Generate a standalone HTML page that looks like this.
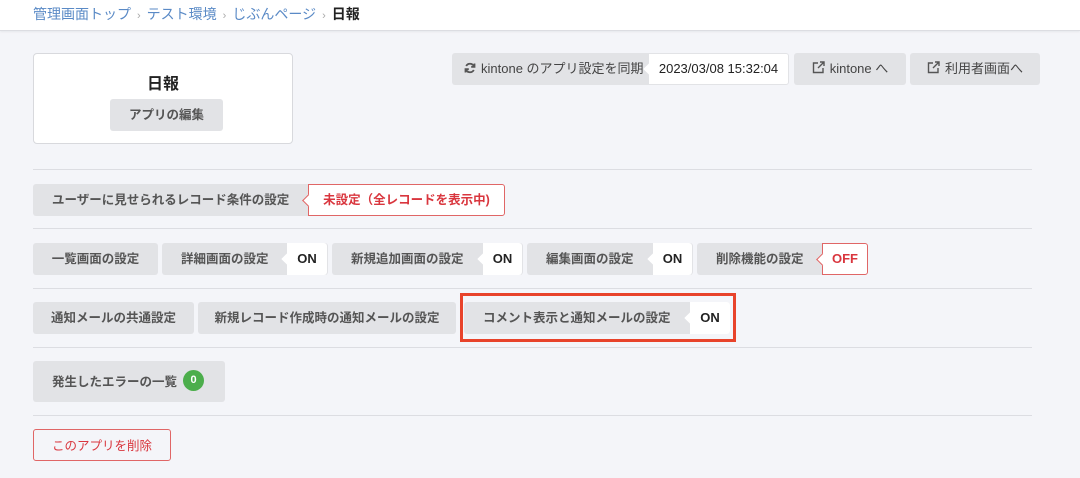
<!DOCTYPE html>
<html><head><meta charset="utf-8"><style>
*{box-sizing:border-box;margin:0;padding:0}
body{width:1080px;height:478px;background:#f4f5f9;font-family:"Liberation Sans","Noto Sans CJK JP",sans-serif;position:relative;overflow:hidden;color:#333}
.hd{position:absolute;left:0;top:0;width:1080px;height:31px;background:#fff;border-bottom:1px solid #dcdde2;box-shadow:0 1px 2px rgba(0,0,0,.06)}
.bc{position:absolute;left:33px;top:4px;font-size:14px;color:#5a8ac6;white-space:nowrap}
.bc .s{color:#aaa;font-size:11px;margin:0 6px}
.bc b{color:#222}
.a{position:absolute}
.btn{position:absolute;background:#e2e3e6;border-radius:3px;font-size:12.5px;font-weight:bold;color:#555;display:flex;align-items:center;justify-content:center;white-space:nowrap;padding-bottom:3px}
.w{position:absolute;background:#fff;font-size:13px;font-weight:bold;color:#222;display:flex;align-items:center;justify-content:center;border-radius:0 3px 3px 0;padding-bottom:1px}
.w:before{content:"";position:absolute;left:-4px;top:50%;width:8px;height:8px;margin-top:-4px;background:inherit;transform:rotate(45deg)}
.r{border:1px solid #e06666;color:#d9363e}
.r:before{border-left:1px solid #e06666;border-bottom:1px solid #e06666;left:-5px}
.hr{position:absolute;left:33px;width:999px;height:1px;background:#dcdde2}
svg{margin-right:5px;flex:none}
</style></head><body>
<div class="hd"><div class="bc">管理画面トップ<span class="s">›</span>テスト環境<span class="s">›</span>じぶんページ<span class="s">›</span><b>日報</b></div></div>

<div class="a" style="left:33px;top:53px;width:260px;height:91px;background:#fff;border:1px solid #d8d9dd;border-radius:4px"></div>
<div class="a" style="left:33px;top:70px;width:260px;text-align:center;font-size:16px;font-weight:bold;color:#222">日報</div>
<div class="btn" style="left:110px;top:99px;width:113px;height:32px">アプリの編集</div>

<div class="btn" style="left:452px;top:53px;width:200px;height:32px;justify-content:flex-start;padding-left:12px;font-weight:normal;color:#444;font-size:13px"><svg width="12" height="12" viewBox="0 0 12 12" fill="none" stroke="#555" stroke-width="1.8"><path d="M10 4.5A4.3 4.3 0 0 0 2.2 4"/><path d="M2 7.5A4.3 4.3 0 0 0 9.8 8"/><path d="M10.5 1.5v3.3H7.2" /><path d="M1.5 10.5V7.2h3.3"/></svg>kintone のアプリ設定を同期</div>
<div class="w" style="left:648px;top:53px;width:141px;height:32px;font-weight:normal;border:1px solid #e2e3e6">2023/03/08 15:32:04</div>
<div class="btn" style="left:794px;top:53px;width:112px;height:32px;font-weight:normal;color:#444;font-size:13px"><svg width="13" height="13" viewBox="0 0 13 13" fill="none" stroke="#555" stroke-width="1.4"><path d="M6 2H1.5v9.5H11V7"/><path d="M8 1h4v4M12 1L6 7"/></svg>kintone へ</div>
<div class="btn" style="left:910px;top:53px;width:130px;height:32px;font-weight:normal;color:#444;font-size:13px"><svg width="13" height="13" viewBox="0 0 13 13" fill="none" stroke="#555" stroke-width="1.4"><path d="M6 2H1.5v9.5H11V7"/><path d="M8 1h4v4M12 1L6 7"/></svg>利用者画面へ</div>

<div class="hr" style="top:169px"></div>
<div class="btn" style="left:33px;top:184px;width:280px;height:32px;justify-content:flex-start;padding-left:19px">ユーザーに見せられるレコード条件の設定</div>
<div class="w r" style="left:308px;top:184px;width:197px;height:32px;font-size:12.5px;padding-bottom:3px">未設定（全レコードを表示中)</div>

<div class="hr" style="top:228px"></div>
<div class="btn" style="left:33px;top:243px;width:125px;height:32px">一覧画面の設定</div>
<div class="btn" style="left:162px;top:243px;width:166px;height:32px;justify-content:flex-start;padding-left:19px">詳細画面の設定</div>
<div class="w" style="left:287px;top:243px;width:40px;height:32px">ON</div>
<div class="btn" style="left:332px;top:243px;width:191px;height:32px;justify-content:flex-start;padding-left:19px">新規追加画面の設定</div>
<div class="w" style="left:483px;top:243px;width:39px;height:32px">ON</div>
<div class="btn" style="left:527px;top:243px;width:166px;height:32px;justify-content:flex-start;padding-left:19px">編集画面の設定</div>
<div class="w" style="left:653px;top:243px;width:39px;height:32px">ON</div>
<div class="btn" style="left:697px;top:243px;width:130px;height:32px;justify-content:flex-start;padding-left:19px">削除機能の設定</div>
<div class="w r" style="left:822px;top:243px;width:46px;height:32px">OFF</div>

<div class="hr" style="top:288px"></div>
<div class="btn" style="left:33px;top:302px;width:161px;height:32px">通知メールの共通設定</div>
<div class="btn" style="left:198px;top:302px;width:258px;height:32px">新規レコード作成時の通知メールの設定</div>
<div class="btn" style="left:464px;top:302px;width:266px;height:32px;justify-content:flex-start;padding-left:19px">コメント表示と通知メールの設定</div>
<div class="w" style="left:690px;top:302px;width:40px;height:32px">ON</div>
<div class="a" style="left:460px;top:293px;width:276px;height:49px;border:3px solid #e8432b"></div>

<div class="hr" style="top:347px"></div>
<div class="btn" style="left:33px;top:361px;width:192px;height:41px;justify-content:flex-start;padding-left:19px;padding-bottom:2px">発生したエラーの一覧<span style="display:inline-block;width:21px;height:21px;border-radius:50%;background:#4cae4c;color:#fff;font-size:11px;text-align:center;line-height:21px;margin-left:6px;font-family:'Liberation Sans',sans-serif">0</span></div>

<div class="hr" style="top:415px"></div>
<div class="a" style="left:33px;top:429px;width:138px;height:32px;border:1px solid #e06666;border-radius:3px;color:#d9363e;font-size:12.5px;display:flex;align-items:center;justify-content:center;padding-bottom:2px">このアプリを削除</div>
</body></html>
